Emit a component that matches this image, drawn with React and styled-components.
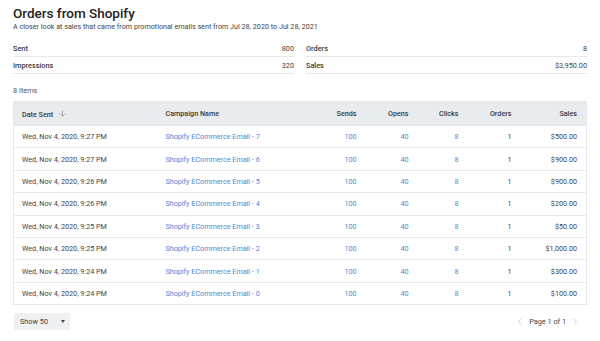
import React from "react";
import styled, { createGlobalStyle } from "styled-components";
import { ArrowDown, ChevronLeft, ChevronRight } from "lucide-react";

const GlobalStyle = createGlobalStyle`
  body {
    margin: 0;
    background: #fff;
    font-family: Roboto, "Liberation Sans", sans-serif;
    color: #333;
  }
`;

const Page = styled.div`
  padding: 4px 13px 0 13px;
`;

const Title = styled.h1`
  margin: 0;
  font-size: 13.5px;
  font-weight: 500;
  line-height: 18px;
  color: #222;
`;

const Subtitle = styled.p`
  margin: 0;
  font-size: 7.2px;
  line-height: 9px;
  color: #444;
`;

const Stats = styled.div`
  display: grid;
  grid-template-columns: 1fr 1fr;
  column-gap: 12px;
  margin-top: 9px;
`;

const StatRow = styled.div`
  display: flex;
  justify-content: space-between;
  align-items: center;
  height: 16px;
  border-bottom: 1px solid #e6e8eb;
  font-size: 7.3px;
  color: #444;

  span:first-child {
    font-weight: 500;
    color: #3a3a3a;
  }
`;

const Count = styled.div`
  margin-top: 12px;
  font-size: 7.3px;
  line-height: 10px;
  color: #555;
`;

const Table = styled.table`
  width: 100%;
  margin-top: 5px;
  border-collapse: collapse;
  table-layout: fixed;
  border: 1px solid #e3e6ea;
  font-size: 7.2px;
`;

const Th = styled.th`
  height: 23px;
  padding: 0 8px;
  background: #e9ecef;
  font-weight: 500;
  color: #3a3a3a;
  text-align: ${(p) => (p.$right ? "right" : "left")};
  padding-right: ${(p) => (p.$last ? "9px" : "8px")};
  white-space: nowrap;
`;

const SortIcon = styled(ArrowDown)`
  margin-left: 5px;
  vertical-align: -1px;
  color: #777;
`;

const Tr = styled.tr`
  border-top: 1px solid #e6e8eb;
`;

const Td = styled.td`
  height: 21.4px;
  padding: 0 8px;
  padding-right: ${(p) => (p.$last ? "9px" : "8px")};
  text-align: ${(p) => (p.$right ? "right" : "left")};
  color: ${(p) => (p.$link ? "#4a8ad6" : "#444")};
  white-space: nowrap;
`;

const Footer = styled.div`
  display: flex;
  justify-content: space-between;
  align-items: center;
  margin-top: 8px;
  padding-left: 1px;
`;

const ShowButton = styled.button`
  display: flex;
  align-items: center;
  gap: 13px;
  width: 56px;
  height: 17px;
  padding: 0 0 0 6px;
  border: none;
  border-radius: 2px;
  background: #eef0f2;
  font-family: inherit;
  font-size: 7.3px;
  color: #444;
`;

const Caret = styled.span`
  width: 0;
  height: 0;
  border-left: 2.5px solid transparent;
  border-right: 2.5px solid transparent;
  border-top: 3px solid #444;
`;

const Pager = styled.div`
  display: flex;
  align-items: center;
  gap: 5px;
  padding-right: 7px;
  font-size: 7.3px;
  color: #444;

  svg {
    color: #aaa;
  }
`;

const rows = [
  ["Wed, Nov 4, 2020, 9:27 PM", 7, "$500.00"],
  ["Wed, Nov 4, 2020, 9:27 PM", 6, "$900.00"],
  ["Wed, Nov 4, 2020, 9:26 PM", 5, "$900.00"],
  ["Wed, Nov 4, 2020, 9:26 PM", 4, "$200.00"],
  ["Wed, Nov 4, 2020, 9:25 PM", 3, "$50.00"],
  ["Wed, Nov 4, 2020, 9:25 PM", 2, "$1,000.00"],
  ["Wed, Nov 4, 2020, 9:24 PM", 1, "$300.00"],
  ["Wed, Nov 4, 2020, 9:24 PM", 0, "$100.00"],
];

export default function App() {
  return (
    <Page>
      <GlobalStyle />
      <Title>Orders from Shopify</Title>
      <Subtitle>
        A closer look at sales that came from promotional emails sent from Jul 28, 2020 to Jul 28, 2021
      </Subtitle>
      <Stats>
        <StatRow><span>Sent</span><span>800</span></StatRow>
        <StatRow><span>Orders</span><span>8</span></StatRow>
        <StatRow><span>Impressions</span><span>320</span></StatRow>
        <StatRow><span>Sales</span><span>$3,950.00</span></StatRow>
      </Stats>
      <Count>8 Items</Count>
      <Table>
        <colgroup>
          <col style={{ width: 144 }} />
          <col style={{ width: 155 }} />
          <col style={{ width: 52 }} />
          <col style={{ width: 52 }} />
          <col style={{ width: 50 }} />
          <col style={{ width: 53 }} />
          <col />
        </colgroup>
        <thead>
          <tr>
            <Th>Date Sent<SortIcon size={9} strokeWidth={1.5} /></Th>
            <Th>Campaign Name</Th>
            <Th $right>Sends</Th>
            <Th $right>Opens</Th>
            <Th $right>Clicks</Th>
            <Th $right>Orders</Th>
            <Th $right $last>Sales</Th>
          </tr>
        </thead>
        <tbody>
          {rows.map(([date, n, sales], i) => (
            <Tr key={i}>
              <Td>{date}</Td>
              <Td $link>Shopify ECommerce Email - {n}</Td>
              <Td $right $link>100</Td>
              <Td $right $link>40</Td>
              <Td $right $link>8</Td>
              <Td $right>1</Td>
              <Td $right $last>{sales}</Td>
            </Tr>
          ))}
        </tbody>
      </Table>
      <Footer>
        <ShowButton>Show 50<Caret /></ShowButton>
        <Pager>
          <ChevronLeft size={9} strokeWidth={1.5} />
          <span>Page 1 of 1</span>
          <ChevronRight size={9} strokeWidth={1.5} />
        </Pager>
      </Footer>
    </Page>
  );
}
